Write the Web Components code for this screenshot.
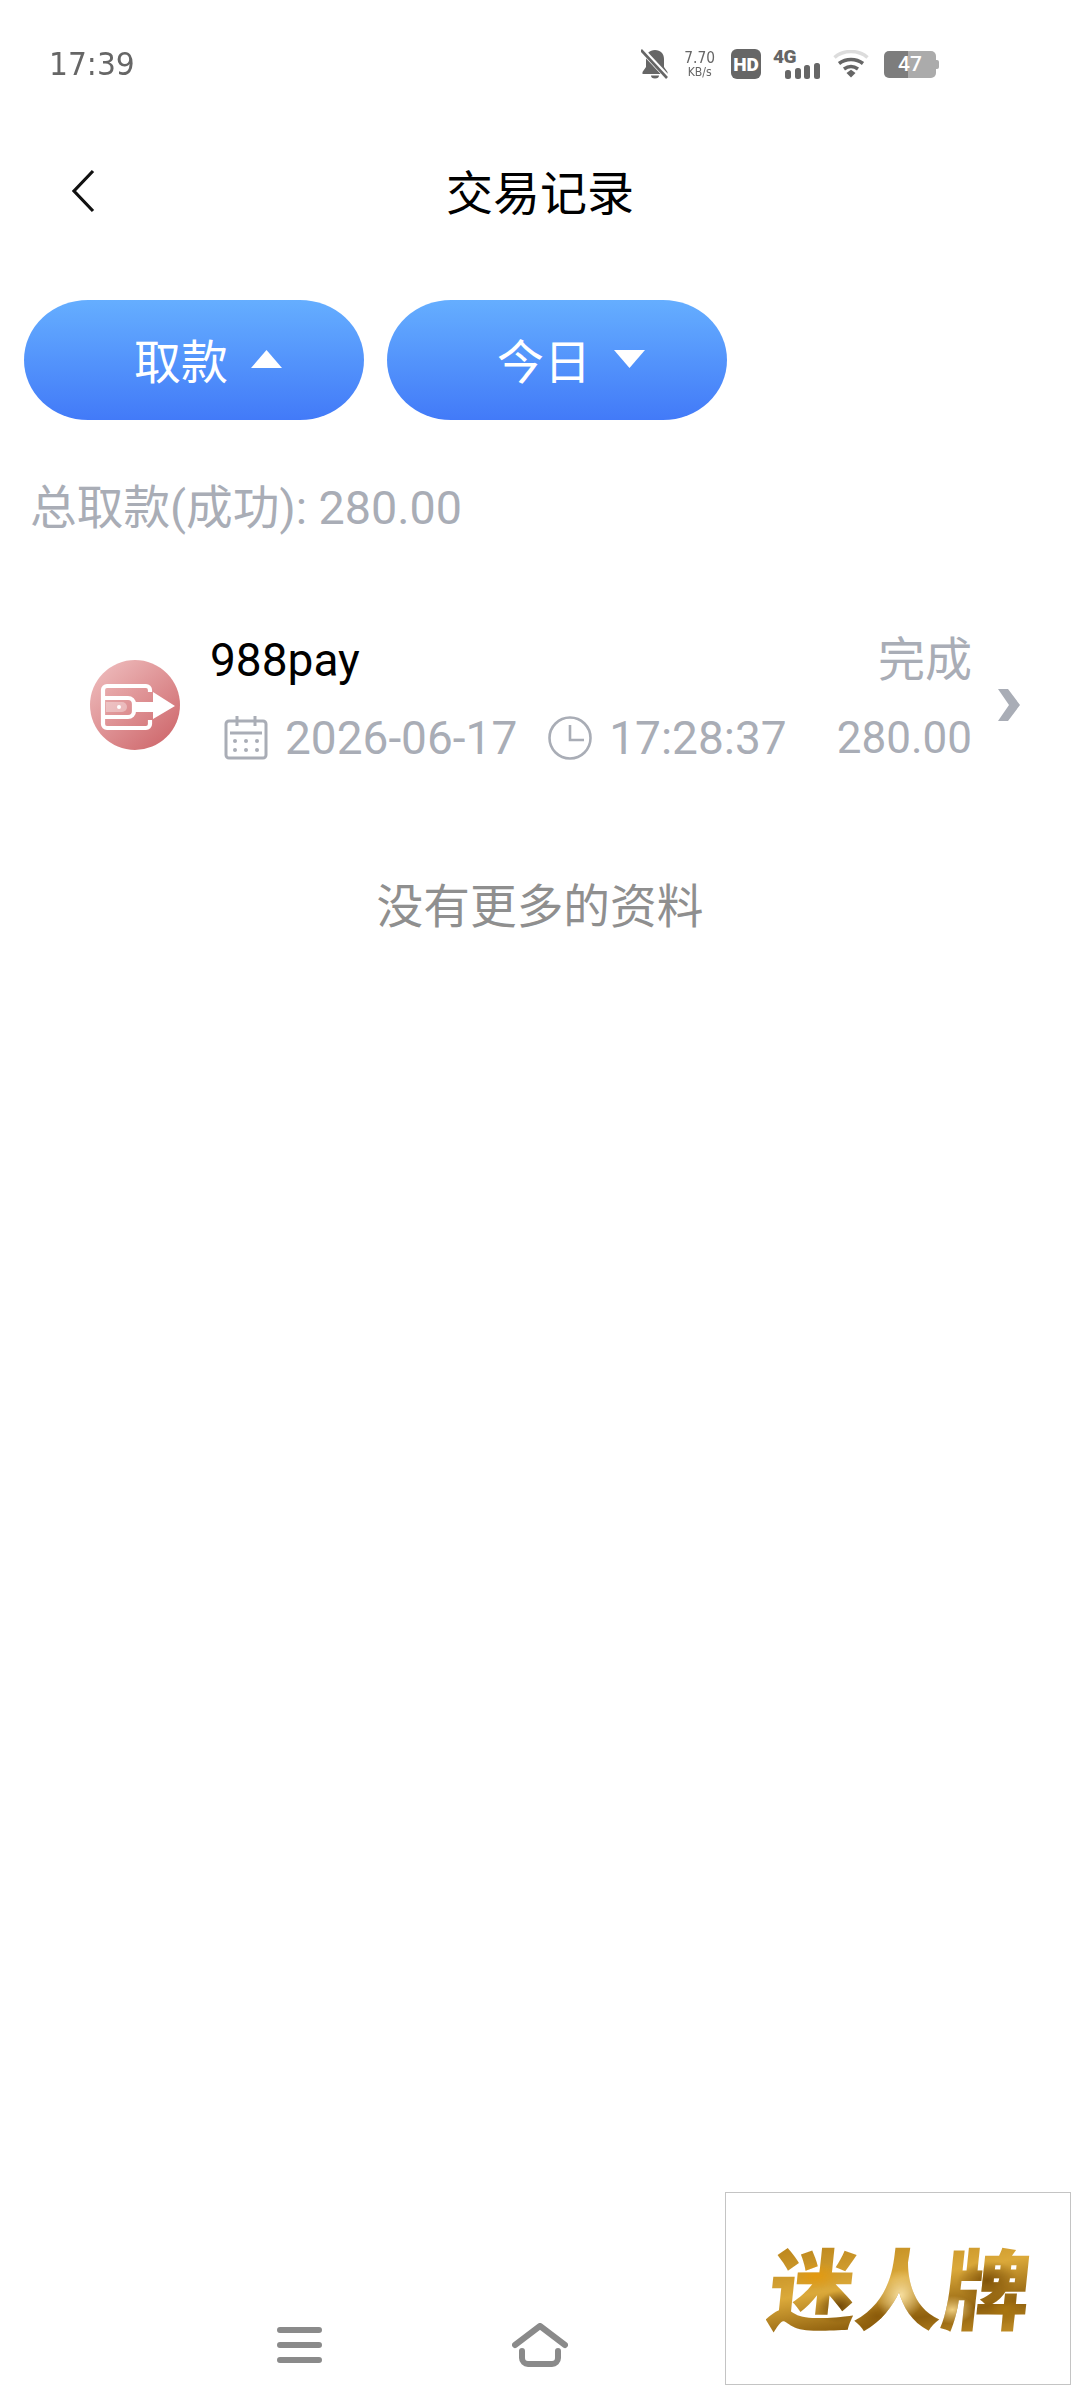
<!DOCTYPE html>
<html lang="zh">
<head>
<meta charset="utf-8">
<title>交易记录</title>
<style>
  html, body { margin: 0; padding: 0; background: #fff; }
  body { font-family: Roboto, "Noto Sans CJK SC", sans-serif; }
</style>
</head>
<body>
<app-screen>
  <status-bar></status-bar>
  <title-bar>交易记录</title-bar>
  <filter-row>
    <filter-pill dir="up">取款</filter-pill>
    <filter-pill dir="down">今日</filter-pill>
  </filter-row>
  <total-line>总取款(成功): 280.00</total-line>
  <record-row name="988pay" date="2026-06-17" time="17:28:37" status="完成" amount="280.00"></record-row>
  <end-note>没有更多的资料</end-note>
  <nav-bar slot="bottom"></nav-bar>
  <brand-badge slot="bottom">迷人牌</brand-badge>
</app-screen>

<script>
function makeEl(name, css, html) {
  const template = document.createElement('template');
  template.innerHTML = `<style>${css}</style>${html}`;
  class El extends HTMLElement {
    constructor() {
      super();
      this.attachShadow({ mode: 'open' });
      this.shadowRoot.appendChild(template.content.cloneNode(true));
    }
  }
  customElements.define(name, El);
}

makeEl('app-screen', `
  :host { display: flex; flex-direction: column; position: relative; width: 1080px; height: 2408px; overflow: hidden; background: #fff; }
  .grow { flex: 1; display: flex; flex-direction: column; }
`, `<div class="grow"><slot></slot></div><slot name="bottom"></slot>`);

makeEl('status-bar', `
  :host { display: flex; align-items: center; justify-content: space-between; height: 64px; margin-top: 32px; padding: 0 141px 0 49px; color: #666; }
  .time { font: 400 32px/1 "DejaVu Sans", Roboto, sans-serif; letter-spacing: 0; transform: scaleX(.93); transform-origin: left; }
  .icons { display: flex; align-items: center; height: 32px; }
  svg { display: block; }
  .speed { display: flex; flex-direction: column; align-items: center; width: 34px; margin: 0 14px 0 14px; font-family: "DejaVu Sans", sans-serif; color: #666; }
  .speed b { font-weight: 400; font-size: 15px; line-height: 16px; transform: scaleX(.92); }
  .speed i { font-style: normal; font-size: 11.500px; line-height: 12px; transform: scaleX(.95); }
  .hd { display: flex; align-items: center; justify-content: center; width: 30px; height: 30px; border-radius: 6px; background: #666; color: #fff; font: 900 19px/1 Roboto, sans-serif; margin-right: 12px; }
  .net { position: relative; width: 47px; height: 30px; margin-right: 13px; }
  .net span { position: absolute; left: 0; top: -2px; font: 900 19px/1 Roboto, sans-serif; color: #666; letter-spacing: -.5px; }
  .net svg { position: absolute; left: 12px; top: 14px; }
  .batt { display: flex; align-items: center; margin-left: 15px; }
  .cell { display: flex; align-items: center; justify-content: center; width: 52px; height: 27px; border-radius: 5px; background: linear-gradient(90deg, #7d7d7d 0 46%, #ababab 46%); color: #fff; font: 500 21px/1 Roboto, sans-serif; }
  .nub { width: 3px; height: 9px; background: #ababab; border-radius: 0 2px 2px 0; }
`, `
  <span class="time">17:39</span>
  <div class="icons">
    <svg width="28" height="30" viewBox="0 0 28 30"><path d="M14 1c-5.500 0-9 3.600-9 9V18l-3.500 5v2h25v-2L23 18v-8C23 4.600 19.500 1 14 1z M10 26.500a4 3 0 0 0 8 0z" fill="#666"/><path d="M1 1 27 29" stroke="#fff" stroke-width="5.500"/><path d="M0 1 26 29" stroke="#666" stroke-width="2.600"/></svg>
    <div class="speed"><b>7.70</b><i>KB/s</i></div>
    <div class="hd">HD</div>
    <div class="net"><span>4G</span>
      <svg width="35" height="16" viewBox="0 0 35 16"><g fill="#666"><rect x="0" y="7" width="6" height="9" rx="2.500"/><rect x="10" y="5" width="6" height="11" rx="2.500"/><rect x="19" y="2" width="6" height="14" rx="2.500"/><rect x="29" y="0" width="6" height="16" rx="2.500"/></g></svg>
    </div>
    <svg width="36" height="28" viewBox="0 0 36 28" fill="none"><path d="M1.500 7.500C10.500-.5 25.500-.5 34.500 7.500" stroke="#dcdcdc" stroke-width="3.500"/><path d="M6 13.500c7-5.500 17-5.500 24 0" stroke="#666" stroke-width="3.500"/><path d="M11 19c4.500-3.200 9.500-3.200 14 0" stroke="#666" stroke-width="3.500"/><path d="M13.500 23 18 19.800 22.500 23 18 27.500z" fill="#666"/></svg>
    <div class="batt"><div class="cell">47</div><div class="nub"></div></div>
  </div>
`);

makeEl('title-bar', `
  :host { display: flex; align-items: center; justify-content: center; position: relative; height: 96px; margin-top: 45px; margin-bottom: 63px; font-size: 47px; color: #000; }
  svg { position: absolute; left: 70px; top: 28px; }
`, `<svg width="26" height="44" viewBox="0 0 26 44" fill="none"><path d="M23 2 4 22l19 20" stroke="#111" stroke-width="3.200"/></svg><slot></slot>`);

makeEl('filter-row', `
  :host { display: flex; gap: 23px; padding: 0 24px; }
`, `<slot></slot>`);

const pillCss = `
  :host { display: flex; align-items: center; justify-content: center; gap: 23px; box-sizing: border-box; width: 340px; height: 120px; padding-left: 28px; padding-bottom: 3px; border-radius: 64px / 60px; background: linear-gradient(180deg, #65aeff, #427af8); color: #fff; font-size: 47px; }
  svg { display: block; }
`;
const pillTpl = document.createElement('template');
pillTpl.innerHTML = `<style>${pillCss}</style><slot></slot><svg width="31" height="20" viewBox="0 0 31 20"><path d="" fill="#fff"/></svg>`;
customElements.define('filter-pill', class extends HTMLElement {
  constructor() {
    super();
    this.attachShadow({ mode: 'open' });
    this.shadowRoot.appendChild(pillTpl.content.cloneNode(true));
  }
  connectedCallback() {
    const up = this.getAttribute('dir') === 'up';
    this.shadowRoot.querySelector('path').setAttribute('d', up ? 'M15.500 1 31 19H0z' : 'M0 1h31L15.500 19z');
  }
});

makeEl('total-line', `
  :host { display: block; margin-top: 56px; padding-left: 30px; font-size: 46.700px; line-height: 64px; color: #a9adb6; }
`, `<slot></slot>`);

const rowTpl = document.createElement('template');
rowTpl.innerHTML = `
  <style>
    :host { display: flex; align-items: center; margin-top: 83px; padding: 0 60px 0 90px; height: 152px; font-size: 46px; color: #a9adb6; }
    .logo { flex: none; width: 90px; height: 90px; margin-right: 30px; margin-top: 12px; }
    .mid { flex: 1; display: flex; flex-direction: column; gap: 8px; }
    .right { display: flex; flex-direction: column; align-items: flex-end; gap: 8px; margin-right: 26px; }
    .name { color: #000; line-height: 70px; }
    .line { display: flex; align-items: center; height: 70px; line-height: 70px; padding-left: 14px; }
    .line svg { display: block; flex: none; margin-right: 17px; }
    .date { margin-right: 31px; }
    .st { line-height: 70px; font-size: 47px; }
    .amt { line-height: 70px; font-size: 44px; }
    .go { flex: none; display: block; margin-top: 12px; }
  </style>
  <svg class="logo" viewBox="0 0 90 90">
    <defs><linearGradient id="g" x1="0.15" y1="0.1" x2="0.85" y2="0.9"><stop offset="0" stop-color="#ecb6b7"/><stop offset="1" stop-color="#d06c70"/></linearGradient></defs>
    <circle cx="45" cy="45" r="45" fill="url(#g)"/>
    <g fill="none" stroke="#fff" stroke-width="4.200" stroke-linejoin="round">
      <path d="M60 32v-2a4 4 0 0 0-4-4H17a4 4 0 0 0-4 4v34a4 4 0 0 0 4 4h39a4 4 0 0 0 4-4v-4"/>
      <path d="M14 38h24a6 6 0 0 1 6 6v7a6 6 0 0 1-6 6H14"/>
    </g>
    <path d="M16 42h16a5 5 0 0 1 0 10H16z" fill="#fff" opacity=".35"/>
    <circle cx="29" cy="47" r="2" fill="#fff"/>
    <path d="M44 42h19V32l22 14-22 13V52H44z" fill="#fff"/>
  </svg>
  <div class="mid">
    <div class="name"></div>
    <div class="line">
      <svg width="44" height="44" viewBox="0 0 44 44" fill="none" stroke="#a9adb6" stroke-width="3"><rect x="2" y="5" width="40" height="37" rx="3"/><path d="M13 0v10M31 0v10M6 17h32"/><g stroke="none" fill="#a9adb6"><circle cx="11" cy="25" r="2"/><circle cx="22" cy="25" r="2"/><circle cx="33" cy="25" r="2"/><circle cx="11" cy="34" r="2"/><circle cx="22" cy="34" r="2"/><circle cx="33" cy="34" r="2"/></g></svg>
      <span class="date"></span>
      <svg width="44" height="44" viewBox="0 0 44 44" fill="none" stroke="#a9adb6" stroke-width="2.600"><circle cx="22" cy="22" r="20.500"/><path d="M22 9v15h14"/></svg>
      <span class="time"></span>
    </div>
  </div>
  <div class="right">
    <span class="st"></span>
    <span class="amt"></span>
  </div>
  <svg class="go" width="22" height="32" viewBox="0 0 22 32"><path d="M0 0h10l12 16-12 16H0l11-16z" fill="#a9adb6"/></svg>
`;
customElements.define('record-row', class extends HTMLElement {
  constructor() {
    super();
    this.attachShadow({ mode: 'open' });
    this.shadowRoot.appendChild(rowTpl.content.cloneNode(true));
  }
  connectedCallback() {
    const s = this.shadowRoot;
    s.querySelector('.name').textContent = this.getAttribute('name');
    s.querySelector('.date').textContent = this.getAttribute('date');
    s.querySelector('.time').textContent = this.getAttribute('time');
    s.querySelector('.st').textContent = this.getAttribute('status');
    s.querySelector('.amt').textContent = this.getAttribute('amount');
  }
});

makeEl('end-note', `
  :host { display: block; margin-top: 100px; text-align: center; font-size: 46.700px; line-height: 64px; color: #8f8f8f; }
`, `<slot></slot>`);

makeEl('nav-bar', `
  :host { display: flex; justify-content: flex-start; align-items: center; gap: 190px; height: 60px; padding: 0 0 0 277px; margin-bottom: 33px; }
  svg { display: block; }
`, `
  <svg width="45" height="36" viewBox="0 0 45 36"><g stroke="#8a8a8a" stroke-width="6" stroke-linecap="round"><path d="M3 3h39M3 18h39M3 33h39"/></g></svg>
  <svg width="56" height="44" viewBox="0 0 56 44" fill="none" stroke="#8a8a8a" stroke-width="6" stroke-linecap="round" stroke-linejoin="round"><path d="M3 22 28 3l25 19"/><path d="M10 28v7a6 6 0 0 0 6 6h24a6 6 0 0 0 6-6v-7"/></svg>
`);

makeEl('brand-badge', `
  :host { position: absolute; left: 725px; top: 2192px; display: flex; align-items: center; justify-content: center; box-sizing: border-box; width: 346px; height: 193px; border: 1.500px solid #c4c4c4; background: #fff; }
  span {
    display: block; padding: 0 4px 0 0; font: 900 88px/1.1 "Noto Sans CJK SC", sans-serif; letter-spacing: -1px;
    transform: skewX(-6deg) translate(4px, -3px);
    color: transparent;
    background:
      radial-gradient(ellipse 26px 14px at 17% 40%, #e3990f, transparent),
      radial-gradient(ellipse 22px 16px at 27% 72%, #6f4708, transparent),
      radial-gradient(ellipse 24px 26px at 50% 60%, #f7dfa0, transparent),
      radial-gradient(ellipse 20px 14px at 42% 82%, #8a5a0a, transparent),
      radial-gradient(ellipse 30px 20px at 82% 45%, #7f5208, transparent),
      radial-gradient(ellipse 22px 14px at 70% 75%, #f0cf80, transparent),
      radial-gradient(ellipse 18px 14px at 90% 75%, #a87510, transparent),
      linear-gradient(170deg, #b57e14, #dba93a 45%, #8e5f0d 75%, #c99428);
    -webkit-background-clip: text; background-clip: text;
  }
`, `<span><slot></slot></span>`);
</script>
</body>
</html>
